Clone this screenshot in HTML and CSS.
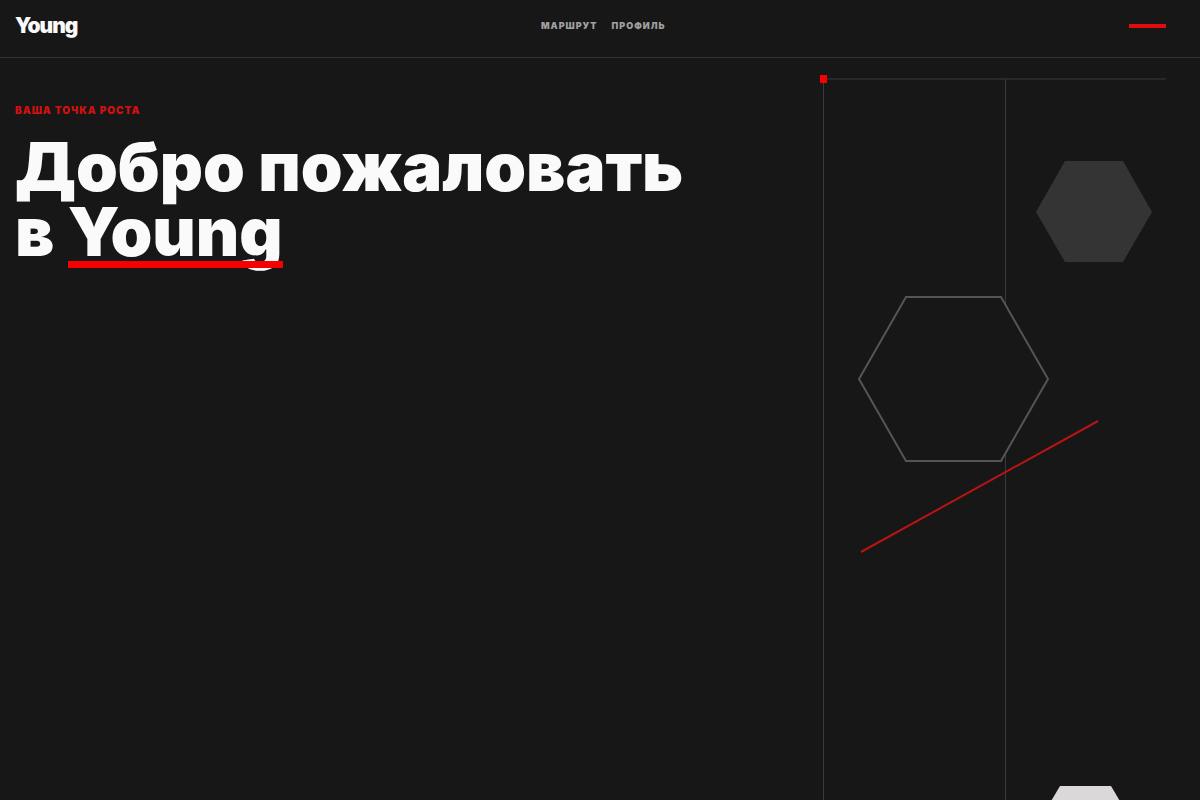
FILE: index.html
```html
<!DOCTYPE html>
<html lang="ru">
  <head>
    <meta charset="UTF-8" />
    <meta name="viewport" content="width=device-width, initial-scale=1.0" />
    <title>Young</title>
    <link rel="stylesheet" href="styles.css">
  </head>
  <body>
    <header class="header">
      <a class="logo" href="#">Young</a>
      <nav class="nav">
        <a href="#route">Маршрут</a>
        <a href="#profile">Профиль</a>
      </nav>
      <span class="header-mark"></span>
    </header>

    <main class="hero">
      <div class="hero-text">
        <p class="eyebrow">Ваша точка роста</p>
        <h1 class="title">Добро пожаловать<br />в <span class="underlined">Young</span></h1>
      </div>

      <svg class="hero-art" width="346" height="820" viewBox="0 0 346 820" aria-hidden="true">
        <!-- grid lines -->
        <path class="grid-line" d="M3.5 21V820M185.5 21V820M3 21H346" />
        <rect class="red-fill" x="0" y="17" width="7" height="8" />

        <!-- hexagons -->
        <polygon class="hex-dark" points="216,154 245,103 303,103 332,154 303,204 245,204" />
        <polygon class="hex-outline" points="39,321 86,239 181,239 228,321 181,403 86,403" />
        <polygon class="hex-light" points="214,772 240,728 291,728 317,772 291,816 240,816" />

        <path class="red-line" d="M41 494L278 363" />
      </svg>
    </main>
  </body>
</html>
```

FILE: styles.css
```css
* {
  box-sizing: border-box;
}

body {
  margin: 0;
  background-color: #171717;
  color: #fafafa;
  font-family: Inter, "Liberation Sans", sans-serif;
  font-weight: 900;
}

a {
  color: inherit;
  text-decoration: none;
}

.header {
  display: flex;
  justify-content: space-between;
  align-items: center;
  height: 58px;
  padding: 0 34px 5px 15px;
  border-bottom: 1px solid #333;
}

.logo {
  font-size: 21px;
  line-height: 24px;
  letter-spacing: -1px;
}

.nav {
  display: flex;
  gap: 14px;
  color: #a0a0a0;
  font-size: 9px;
  line-height: 12px;
  letter-spacing: 1px;
  text-transform: uppercase;
}

.header-mark {
  width: 37px;
  height: 4px;
  background-color: #e10c0c;
}

.hero {
  display: grid;
  grid-template-columns: 1fr 346px;
  height: calc(100vh - 58px);
  padding: 0 34px 0 15px;
  overflow: hidden;
}

.hero-text {
  padding-top: 46px;
}

.eyebrow {
  margin: 0 0 18px;
  color: #d41010;
  font-size: 10px;
  line-height: 12px;
  letter-spacing: 1px;
  text-transform: uppercase;
}

.title {
  margin: 0;
  font-size: 67px;
  font-weight: 900;
  line-height: 65px;
}

.underlined {
  position: relative;
}

.underlined::after {
  content: "";
  position: absolute;
  left: 0;
  right: 0;
  bottom: 4px;
  height: 7px;
  background-color: #f60000;
}

.hero-art {
  display: block;
}

.grid-line {
  fill: none;
  stroke: #3a3a3a;
}

.red-fill {
  fill: #f60000;
}

.red-line {
  stroke: #b81414;
  stroke-width: 2;
}

.hex-dark {
  fill: #343434;
}

.hex-outline {
  fill: #171717;
  stroke: #555;
  stroke-width: 2;
}

.hex-light {
  fill: #dad8d9;
}
```
